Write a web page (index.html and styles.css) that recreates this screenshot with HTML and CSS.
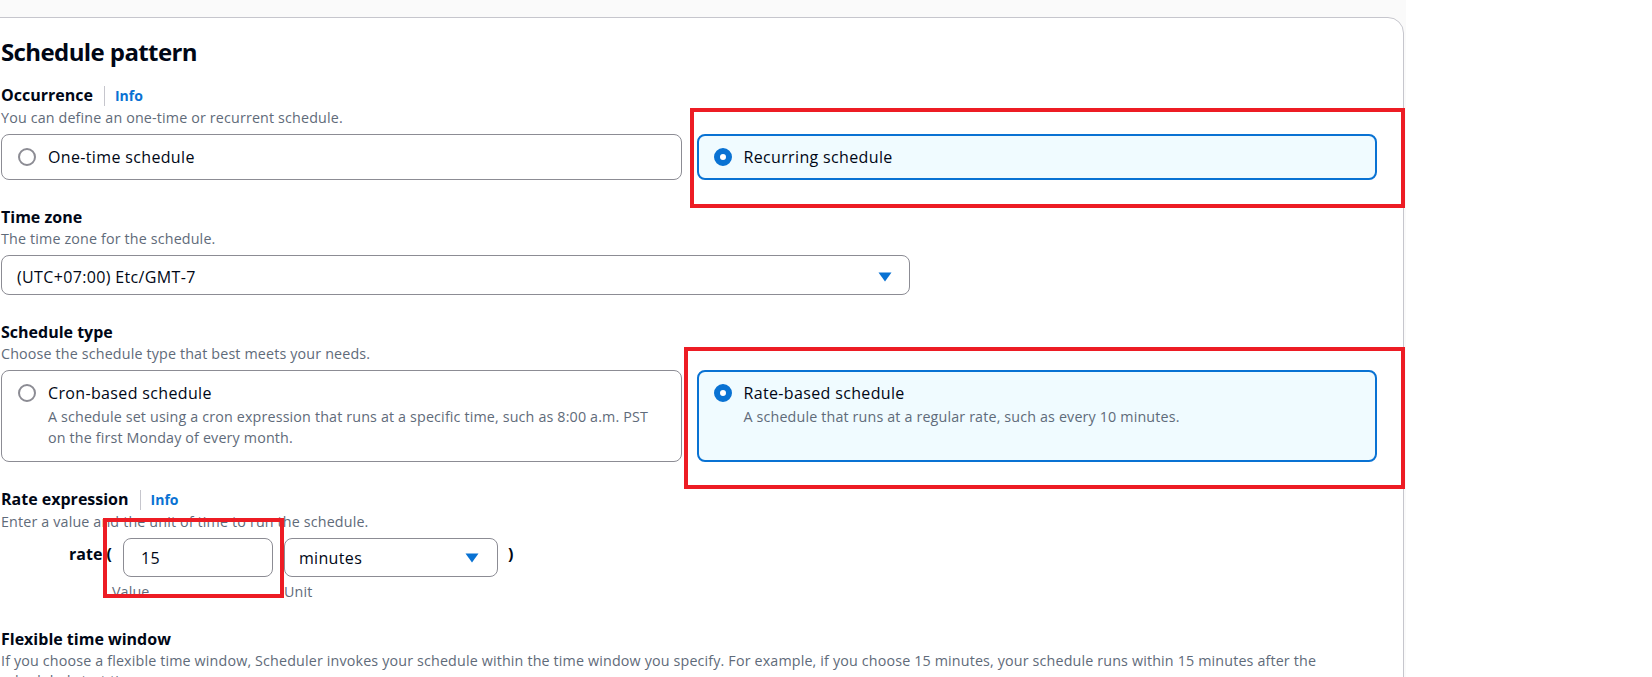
FILE: index.html
```html
<!DOCTYPE html>
<html lang="en">
<head>
<meta charset="utf-8">
<title>Schedule pattern</title>
<link rel="stylesheet" href="styles.css">
</head>
<body>
<div class="page">
  <section class="card">
    <h2 class="card-title">Schedule pattern</h2>

    <div class="field field-first">
      <div class="field-label"><span>Occurrence</span><span class="sep"></span><a class="info">Info</a></div>
      <div class="field-desc">You can define an one-time or recurrent schedule.</div>
      <div class="tiles">
        <div class="tile">
          <span class="radio"></span>
          <div class="tile-body"><div class="tile-title">One-time schedule</div></div>
        </div>
        <div class="tile tile-selected">
          <span class="radio radio-checked"></span>
          <div class="tile-body"><div class="tile-title">Recurring schedule</div></div>
          <span class="mark mark-recurring"></span>
        </div>
      </div>
    </div>

    <div class="field">
      <div class="field-label"><span>Time zone</span></div>
      <div class="field-desc">The time zone for the schedule.</div>
      <div class="select select-wide">
        <span class="select-value">(UTC+07:00) Etc/GMT-7</span>
        <svg class="caret" width="14" height="10" viewBox="0 0 14 10"><path d="M0.5 0.5 H13.5 L7 9.5 Z" fill="#0972d3"/></svg>
      </div>
    </div>

    <div class="field">
      <div class="field-label"><span>Schedule type</span></div>
      <div class="field-desc">Choose the schedule type that best meets your needs.</div>
      <div class="tiles">
        <div class="tile">
          <span class="radio"></span>
          <div class="tile-body">
            <div class="tile-title">Cron-based schedule</div>
            <div class="tile-desc">A schedule set using a cron expression that runs at a specific time, such as 8:00 a.m. PST on the first Monday of every month.</div>
          </div>
        </div>
        <div class="tile tile-selected">
          <span class="radio radio-checked"></span>
          <div class="tile-body">
            <div class="tile-title">Rate-based schedule</div>
            <div class="tile-desc">A schedule that runs at a regular rate, such as every 10 minutes.</div>
          </div>
          <span class="mark mark-rate"></span>
        </div>
      </div>
    </div>

    <div class="field">
      <div class="field-label"><span>Rate expression</span><span class="sep"></span><a class="info">Info</a></div>
      <div class="field-desc">Enter a value and the unit of time to run the schedule.</div>
      <div class="rate-row">
        <span class="rate-prefix">rate (</span>
        <div class="rate-col">
          <div class="input-wrap">
            <input class="text-input" type="text" value="15" aria-label="Value">
            <span class="mark mark-value"></span>
          </div>
          <span class="sub-label">Value</span>
        </div>
        <div class="rate-col rate-col-unit">
          <div class="select select-unit">
            <span class="select-value">minutes</span>
            <svg class="caret" width="14" height="10" viewBox="0 0 14 10"><path d="M0.5 0.5 H13.5 L7 9.5 Z" fill="#0972d3"/></svg>
          </div>
          <span class="sub-label sub-label-unit">Unit</span>
        </div>
        <span class="rate-suffix">)</span>
      </div>
    </div>

    <div class="field">
      <div class="field-label"><span>Flexible time window</span></div>
      <div class="field-desc">If you choose a flexible time window, Scheduler invokes your schedule within the time window you specify. For example, if you choose 15 minutes, your schedule runs within 15 minutes after the scheduled start time.</div>
    </div>
  </section>
</div>
</body>
</html>
```

FILE: styles.css
```css
* { box-sizing: border-box; }

html, body {
  margin: 0;
  padding: 0;
  overflow: hidden;
  background: #ffffff;
}

body {
  font-family: "Open Sans", "Liberation Sans", Arial, sans-serif;
  font-size: 14px;
  color: #000716;
}

.page {
  width: 1406px;
  min-height: 677px;
  background: #fafafa;
  padding-top: 17px;
}

.card {
  width: 1430px;
  margin-left: -26px;
  min-height: 700px;
  background: #ffffff;
  border: 1px solid #c6c6cd;
  border-radius: 16px;
  padding: 19px 26px 20px 26px;
}

.card-title {
  margin: 0;
  font-size: 24px;
  line-height: 30px;
  font-weight: 700;
  letter-spacing: -0.6px;
}

.field { margin-top: 25px; }
.field-first { margin-top: 16px; }

.field-label {
  display: flex;
  align-items: baseline;
  font-size: 16px;
  line-height: 24px;
  font-weight: 700;
}

.sep {
  align-self: center;
  width: 1px;
  height: 20px;
  background: #c6c6cd;
  margin: 0 10px 0 11px;
}

.info {
  font-size: 14px;
  font-weight: 700;
  color: #0972d3;
  cursor: pointer;
}

.field-desc {
  font-size: 14.3px;
  line-height: 20px;
  color: #5f6b7a;
  letter-spacing: 0.15px;
}

.tiles {
  margin-top: 6px;
  display: grid;
  grid-template-columns: 1fr 1fr;
  column-gap: 15px;
}

.tile {
  position: relative;
  display: flex;
  align-items: flex-start;
  gap: 12px;
  border: 1px solid #8c8c94;
  border-radius: 8px;
  padding: 11px 15px 11px 16px;
  background: #ffffff;
}

.tile-selected {
  border: 2px solid #0972d3;
  background: #f0fbff;
  padding: 10px 14px 10px 15px;
}

.radio {
  flex: none;
  width: 18px;
  height: 18px;
  margin-top: 2px;
  border-radius: 50%;
  border: 2px solid #8c8c94;
  background: #ffffff;
}

.radio-checked {
  border: 6px solid #0972d3;
}

.tile-body { min-width: 0; }

.tile-title {
  font-size: 16px;
  line-height: 22px;
  letter-spacing: 0.35px;
}

.tile-desc {
  margin: 2px 0 2px;
  font-size: 14.3px;
  line-height: 21px;
  color: #5f6b7a;
  letter-spacing: 0.15px;
}

.select {
  display: flex;
  align-items: center;
  justify-content: space-between;
  height: 40px;
  border: 1px solid #8c8c94;
  border-radius: 8px;
  background: #ffffff;
  font-size: 16px;
  letter-spacing: 0.35px;
}

.select-wide {
  margin-top: 6px;
  width: 909px;
  padding: 3px 17px 0 15px;
}

.select-unit {
  width: 214px;
  height: 39px;
  padding: 0 18px 0 14px;
}

.caret { flex: none; display: block; }

.rate-row {
  margin-top: 6px;
  display: flex;
  align-items: flex-start;
  padding-left: 68px;
}

.rate-prefix,
.rate-suffix {
  font-size: 16px;
  font-weight: 700;
  line-height: 33px;
  white-space: pre;
}

.rate-suffix { margin-left: 10px; }

.rate-col {
  display: flex;
  flex-direction: column;
}

.rate-col-unit { margin-left: 11px; }

.input-wrap {
  position: relative;
  margin-left: 11px;
}

.text-input {
  display: block;
  width: 150px;
  height: 39px;
  margin: 0;
  border: 1px solid #8c8c94;
  border-radius: 8px;
  padding: 0 17px;
  font-family: inherit;
  font-size: 16px;
  letter-spacing: 0.35px;
  color: #000716;
  background: #ffffff;
  outline: none;
}

.sub-label {
  margin-top: 5px;
  font-size: 14.3px;
  line-height: 20px;
  color: #5f6b7a;
  letter-spacing: 0.15px;
}

/* red annotation rectangles drawn over the screenshot */
.mark {
  position: absolute;
  border: 4px solid #ed1c24;
  pointer-events: none;
}

.mark-recurring { left: -9px; right: -30px; top: -28px; bottom: -30px; }
.mark-rate { left: -15px; right: -30px; top: -25px; bottom: -29px; }
.mark-value { left: -20px; right: -11px; top: -20px; bottom: -21px; }
```
